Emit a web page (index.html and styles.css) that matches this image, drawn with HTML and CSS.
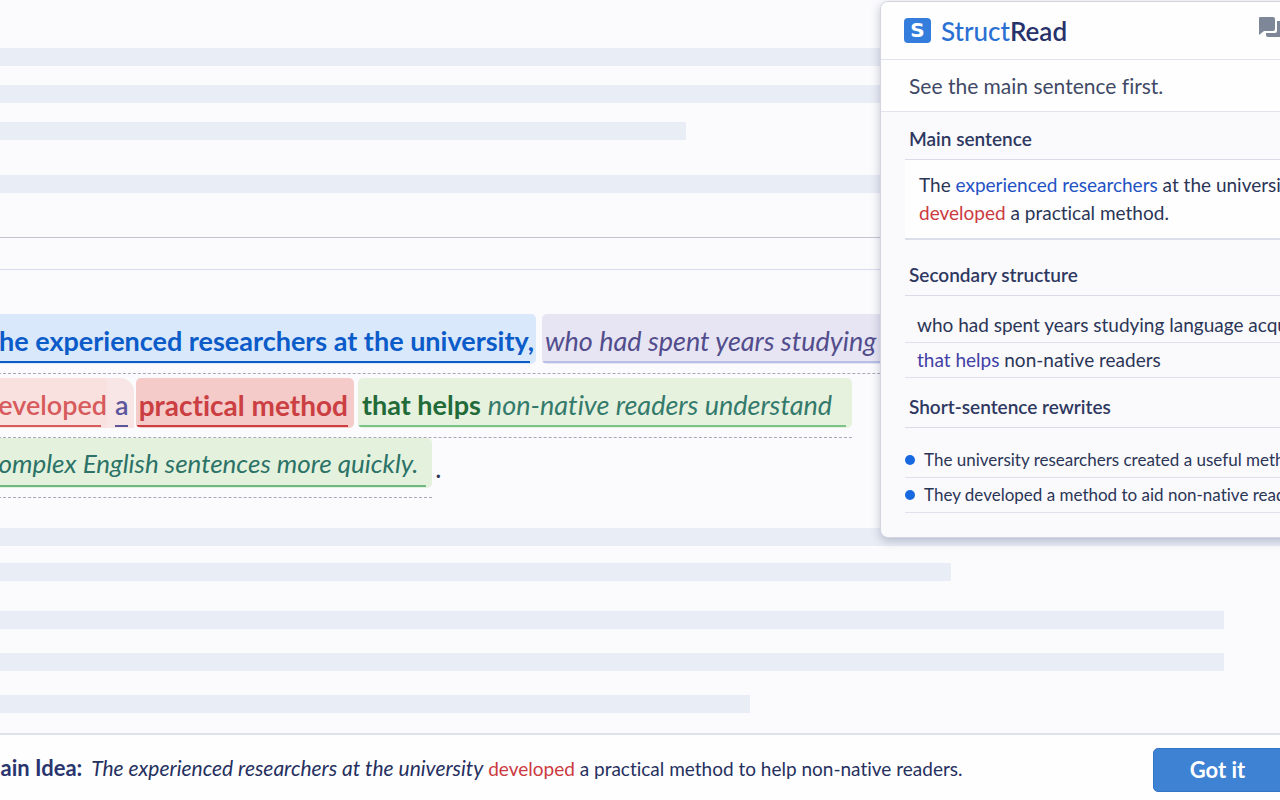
FILE: index.html
```
<!DOCTYPE html>
<html lang="en">
<head>
    <meta charset="UTF-8">
    <meta name="viewport" content="width=device-width, initial-scale=1.0">
    <title>StructRead</title>
    <link rel="stylesheet" href="styles.css">
</head>
<body>
    <main class="reader">
        <div class="lines lines-top">
            <div class="line full"></div>
            <div class="line full"></div>
            <div class="line half"></div>
            <div class="line full spaced"></div>
        </div>
        <div class="divider"></div>
        <article class="sentence">
            <p class="row row-first">
                <mark class="subject">The experienced researchers at the university,</mark>
                <mark class="clause">who had spent years studying</mark>
            </p>
            <p class="row row-second">
                <mark class="verb">developed</mark>
                <mark class="article">a</mark>
                <mark class="object">practical method</mark>
                <mark class="result"><b>that helps</b> <i>non-native readers understand</i></mark>
            </p>
            <p class="row row-last">
                <mark class="result-end">complex English sentences more quickly.</mark>
                <span class="stop">.</span>
            </p>
        </article>
        <div class="lines lines-bottom">
            <div class="line full"></div>
            <div class="line three-quarter"></div>
            <div class="line wide spaced"></div>
            <div class="line wide loose"></div>
            <div class="line short loose"></div>
        </div>
    </main>

    <aside class="panel">
        <header class="panel-header">
            <span class="logo">S</span>
            <h1><span>Struct</span>Read</h1>
            <button class="chat" aria-label="Chat">
                <svg width="30" height="26" viewBox="0 0 30 26">
                    <path d="M2 1h13a2 2 0 0 1 2 2v10a2 2 0 0 1-2 2H6l-5 4V2a1 1 0 0 1 1-1z" fill="#7e8797"/>
                    <path d="M19 5h7a2 2 0 0 1 2 2v16l-5-2H10a2 2 0 0 1-2-2v-2h9a2 2 0 0 0 2-2z" fill="#7e8797"/>
                </svg>
            </button>
        </header>
        <p class="tagline">See the main sentence first.</p>
        <div class="panel-body">
            <h2>Main sentence</h2>
            <p class="main-sentence">The <span class="blue">experienced researchers</span> at the university<br><span class="red">developed</span> a practical method.</p>
            <h2>Secondary structure</h2>
            <ul class="structure">
                <li>who had spent years studying language acquisition</li>
                <li><span class="violet">that helps</span> non-native readers</li>
            </ul>
            <h2>Short-sentence rewrites</h2>
            <ul class="rewrites">
                <li>The university researchers created a useful method.</li>
                <li>They developed a method to aid non-native readers.</li>
            </ul>
        </div>
    </aside>

    <footer class="footer">
        <p><strong>Main Idea:</strong> <em>The experienced researchers at the university</em> <span class="red">developed</span> a practical method to help non-native readers.</p>
        <button class="got-it">Got it</button>
    </footer>
</body>
</html>
```
FILE: styles.css
```
* {
    box-sizing: border-box;
}
body {
    margin: 0;
    min-height: 100vh;
    display: flex;
    flex-direction: column;
    position: relative;
    overflow: hidden;
    font-family: Lato, "Noto Sans", sans-serif;
    font-variant-ligatures: none;
    color: #2b3556;
    background-color: #fbfbfd;
}
h1, h2, p, ul {
    margin: 0;
    padding: 0;
}
ul {
    list-style: none;
}
.reader {
    flex: 1;
}

/* placeholder text lines */
.lines {
    display: flex;
    flex-direction: column;
    gap: 19px;
}
.lines-top {
    padding-top: 48px;
}
.lines-bottom {
    padding-top: 30px;
    gap: 17px;
}
.line {
    height: 18px;
    background-color: #e9edf5;
}
.full {
    width: 100%;
}
.half {
    width: 53.6%;
}
.three-quarter {
    width: 74.3%;
}
.wide {
    width: 95.6%;
}
.short {
    width: 58.6%;
}
.spaced {
    margin-top: 16px;
}
.lines-bottom .spaced {
    margin-top: 13px;
}
.loose {
    margin-top: 7px;
}
.divider {
    height: 33px;
    margin-top: 44px;
    border-top: 1px solid #c3c6d2;
    border-bottom: 1px solid #d8dbea;
}

/* highlighted sentence */
.sentence {
    margin-left: -17px;
    padding-top: 44px;
    font-size: 27px;
    white-space: nowrap;
}
.row {
    display: flex;
    align-items: flex-start;
    height: 60px;
    border-bottom: 1px dashed #a9a8b8;
}
.row-first {
    margin-bottom: 4px;
}
.row-second {
    width: 869px;
}
.row-last {
    width: 449px;
    font-size: 26px;
}
mark {
    height: 50px;
    line-height: 54px;
    border-radius: 5px;
    color: inherit;
    background: linear-gradient(currentColor, currentColor) no-repeat 0 47px / calc(100% - 6px) 2px;
}
.subject {
    padding-right: 2px;
    margin-right: 6px;
    color: #0b5bc9;
    background-color: #d9e9fb;
    font-weight: 700;
}
.clause {
    flex: 1;
    padding-left: 3px;
    color: #524d8c;
    background-color: #e7e5f3;
    background-image: linear-gradient(#b9bfe4, #b9bfe4);
    font-style: italic;
}
.verb {
    border-radius: 0;
    color: #d75a5c;
    background-color: #f9e1df;
    font-weight: 600;
}
.article {
    padding: 0 5px 0 8px;
    margin-right: 2px;
    border-radius: 0 14px 0 0;
    color: #5c569c;
    background-color: #f8e6e7;
    background-position: 8px 47px;
    background-size: 13px 2px;
    font-weight: 600;
}
.object {
    padding: 0 6px 0 3px;
    margin-right: 4px;
    color: #cb3f43;
    background-color: #f4cbc9;
    font-size: 28px;
    font-weight: 700;
}
.result {
    flex: 1;
    padding-left: 4px;
    color: #347a6c;
    background-color: #e6f2de;
    background-image: linear-gradient(#7cc387, #7cc387);
}
.result b {
    color: #226b39;
    font-weight: 700;
}
.result-end {
    padding-left: 4px;
    padding-right: 14px;
    line-height: 50px;
    color: #2c7267;
    background-color: #e4f2dd;
    background-image: linear-gradient(#6fb981, #6fb981);
    font-style: italic;
}
.stop {
    line-height: 60px;
    margin-left: 3px;
}

/* side panel over the page */
.panel {
    position: absolute;
    top: 1px;
    right: -60px;
    width: 460px;
    height: 537px;
    border: 1px solid #d3d6e1;
    border-radius: 8px;
    background-color: #fafafd;
    box-shadow: 0 3px 10px rgba(60, 70, 110, 0.3);
    overflow: hidden;
    white-space: nowrap;
}
.panel-header {
    display: flex;
    align-items: center;
    height: 58px;
    padding-left: 23px;
    border-bottom: 1px solid #e0e2ec;
    background-color: #fefefe;
}
.logo {
    width: 27px;
    height: 25px;
    border-radius: 4px;
    background-color: #347ddd;
    color: #fff;
    font: bold 20px/25px "DejaVu Sans", sans-serif;
    text-align: center;
}
h1 {
    margin-left: 10px;
    font-size: 26px;
    font-weight: 600;
    color: #27316a;
}
h1 span {
    color: #2a70d3;
    font-weight: 500;
}
.chat {
    margin-left: auto;
    margin-right: 51px;
    padding: 0;
    border: none;
    background: none;
}
.tagline {
    height: 52px;
    padding-left: 28px;
    border-bottom: 1px solid #e3e4ee;
    background-color: #fefefe;
    font-size: 21px;
    line-height: 52px;
    color: #404966;
}
.panel-body {
    padding-left: 24px;
}
h2 {
    height: 48px;
    padding-left: 4px;
    border-bottom: 1px solid #d9dbea;
    font-size: 19px;
    font-weight: 600;
    line-height: 54px;
    color: #2e3860;
}
.main-sentence {
    padding: 11px 14px;
    margin-bottom: 8px;
    border-bottom: 2px solid #dcdfeb;
    background-color: #fefefe;
    font-size: 19px;
    line-height: 28px;
}
.structure, .rewrites {
    padding-top: 12px;
    line-height: 34px;
}
.structure li, .rewrites li {
    border-bottom: 1px solid #e0e1ed;
}
.structure {
    padding-bottom: 2px;
    font-size: 19px;
}
.structure li {
    padding-left: 12px;
}
.rewrites {
    padding-top: 15px;
    font-size: 17px;
}
.rewrites li {
    display: flex;
    align-items: center;
    gap: 9px;
}
.rewrites li::before {
    content: "";
    flex: none;
    width: 10px;
    height: 10px;
    border-radius: 50%;
    background-color: #1868df;
}
.blue {
    color: #2352c4;
}
.red {
    color: #cb3a3f;
}
.violet {
    color: #4240a5;
}

/* bottom bar */
.footer {
    display: flex;
    align-items: center;
    justify-content: space-between;
    height: 67px;
    margin-left: -20px;
    margin-right: -20px;
    padding-top: 4px;
    border-top: 2px solid #e0e2eb;
    background-color: #fefefe;
    font-size: 19px;
    color: #26305f;
    white-space: nowrap;
}
.footer p {
    padding-bottom: 4px;
}
.footer strong {
    margin-right: 4px;
    font-size: 22px;
    color: #2a356f;
}
.footer em {
    font-size: 21px;
}
.got-it {
    width: 147px;
    height: 44px;
    padding: 0 18px 0 0;
    border: 1px solid #3474c6;
    border-radius: 5px;
    background-color: #3d82d3;
    color: #fff;
    font: bold 22px Lato, sans-serif;
}
```
